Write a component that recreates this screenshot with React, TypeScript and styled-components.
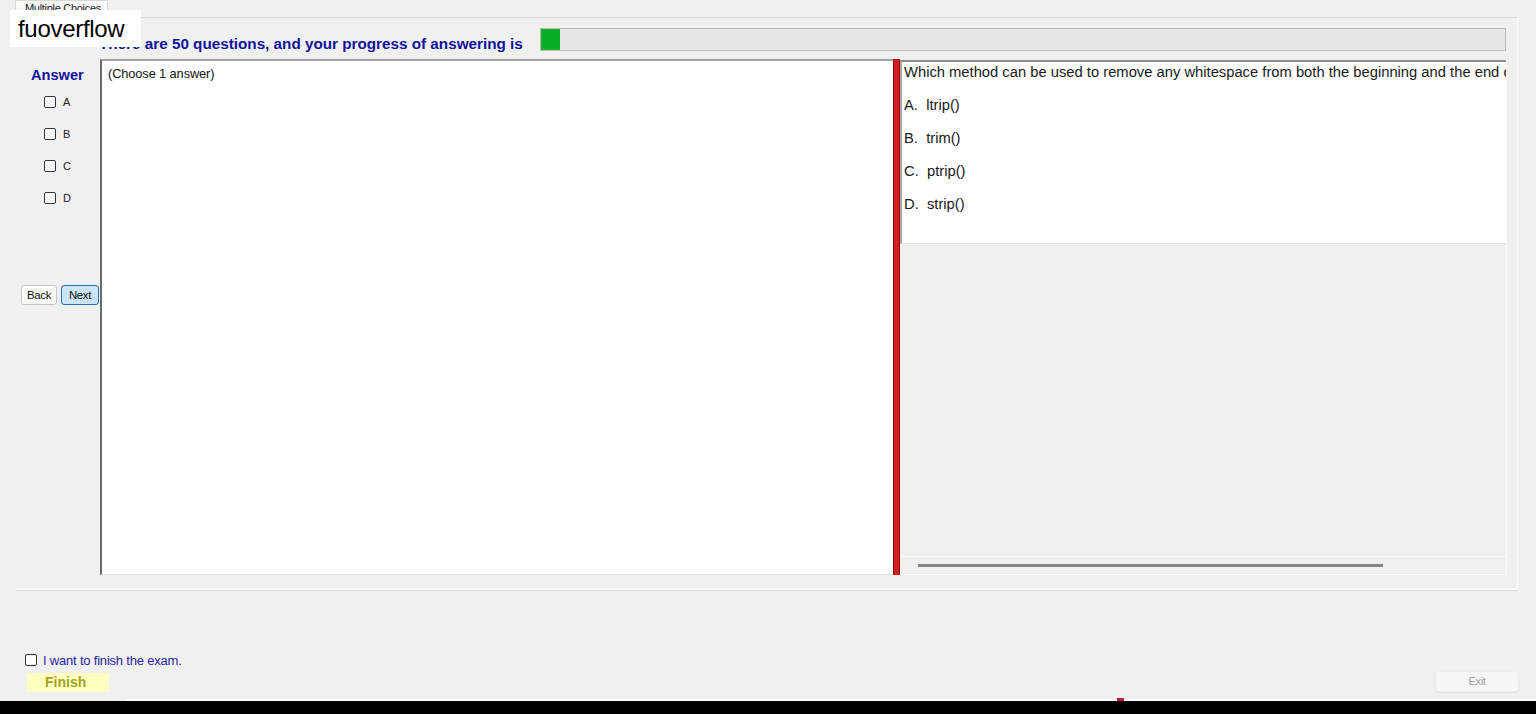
import React from "react";
import styled, { createGlobalStyle } from "styled-components";

const GlobalStyle = createGlobalStyle`
  html, body { margin: 0; padding: 0; }
  body {
    background: #f0f0f0;
    font-family: "Liberation Sans", Arial, sans-serif;
    overflow: hidden;
  }
  * { box-sizing: border-box; }
`;

const Page = styled.div`
  position: relative;
  width: 1536px;
  height: 714px;
  display: flex;
  flex-direction: column;
  background: #f0f0f0;
`;

const TabStrip = styled.div`
  height: 17px;
  padding-left: 15px;
  display: flex;
  align-items: flex-end;
`;

const Tab = styled.div`
  height: 18px;
  padding: 0 6px 0 9px;
  background: #f9f9f9;
  border: 1px solid #d9d9d9;
  border-bottom: none;
  font-size: 11px;
  line-height: 14px;
  color: #222;
  letter-spacing: -0.3px;
  margin-bottom: -1px;
  position: relative;
  z-index: 1;
`;

const TabPage = styled.div`
  margin: 0 18px 0 16px;
  height: 573px;
  border-top: 1px solid #dadada;
  border-bottom: 2px solid #fafafa;
  box-shadow: 0 1px 0 #dcdcdc;
  border-right: 1px solid #fafafa;
  display: flex;
  flex-direction: column;
`;

const HeaderRow = styled.div`
  height: 41px;
  display: flex;
  align-items: center;
  padding-left: 83px;
  padding-right: 11px;
`;

const Title = styled.div`
  font-weight: bold;
  font-size: 15.25px;
  color: #11139c;
  margin-top: 9px;
  white-space: nowrap;
`;

const Progress = styled.div`
  flex: 1;
  height: 23px;
  margin-left: 17px;
  margin-top: 2px;
  background: #e6e6e6;
  border: 1px solid #bcbcbc;
  display: flex;
`;

const ProgressFill = styled.div`
  height: 100%;
  background: #06b025;
`;

const Body = styled.div`
  height: 516px;
  display: flex;
`;

const LeftColumn = styled.div`
  width: 84px;
  display: flex;
  flex-direction: column;
`;

const AnswerLabel = styled.div`
  margin: 8px 0 0 15px;
  height: 16px;
  line-height: 16px;
  font-weight: bold;
  font-size: 14.6px;
  color: #11139c;
`;

const OptionList = styled.div`
  margin: 12px 0 0 28px;
  display: flex;
  flex-direction: column;
  gap: 18px;
`;

const OptionRow = styled.label`
  height: 14px;
  display: flex;
  align-items: center;
  gap: 7px;
  font-size: 11px;
  color: #222;
`;

const Box = styled.span<{ $size?: number }>`
  display: inline-block;
  width: ${(p) => p.$size ?? 12}px;
  height: ${(p) => p.$size ?? 12}px;
  border: 1px solid #333;
  border-radius: 2px;
  background: #fff;
  flex: none;
`;

const ButtonRow = styled.div`
  margin: 80px 0 0 5px;
  display: flex;
  gap: 4px;
`;

const NavButton = styled.button<{ $primary?: boolean }>`
  height: 20px;
  padding: 0;
  width: ${(p) => (p.$primary ? 38 : 36)}px;
  font-family: "Liberation Sans", Arial, sans-serif;
  font-size: 11.5px;
  letter-spacing: -0.4px;
  color: #111;
  background: ${(p) => (p.$primary ? "#cce4f7" : "#fdfdfd")};
  border: 1px solid ${(p) => (p.$primary ? "#2b6fae" : "#c6c6c6")};
  border-radius: 3px;
`;

const AnswerPanel = styled.div`
  width: 793px;
  background: #fff;
  border-top: 2px solid #a3a3a3;
  border-left: 2px solid #6a6a6a;
  border-bottom: 1px solid #e3e3e3;
  padding: 5px 0 0 6px;
  font-size: 12.8px;
  color: #111;
  letter-spacing: -0.1px;
`;

const Splitter = styled.div`
  width: 7px;
  background: #d51e1e;
  border-left: 1px solid #8a1010;
  border-right: 1px solid #8a1010;
`;

const RightPanel = styled.div`
  width: 607px;
  display: flex;
  flex-direction: column;
  border-right: 1px solid #fdfdfd;
  border-bottom: 1px solid #fdfdfd;
`;

const QuestionBox = styled.div`
  height: 184px;
  margin-top: 1px;
  background: #fff;
  border-top: 2px solid #8c8c8c;
  border-left: 2px solid #a9a9a9;
  border-bottom: 1px solid #e4e4e4;
  padding: 2px 0 0 2px;
  overflow: hidden;
  display: flex;
  flex-direction: column;
  gap: 16px;
`;

const QLine = styled.div`
  font-size: 14.75px;
  line-height: 17px;
  color: #1a1a1a;
  white-space: pre;
`;

const Filler = styled.div`
  flex: 1;
`;

const ScrollTrack = styled.div`
  height: 18px;
  border-top: 1px solid #fbfbfb;
  display: flex;
  align-items: center;
  padding-left: 18px;
`;

const ScrollThumb = styled.div`
  width: 465px;
  height: 3px;
  background: #858585;
`;

const BottomArea = styled.div`
  padding: 63px 0 0 25px;
  display: flex;
  flex-direction: column;
`;

const FinishCheck = styled.label`
  height: 14px;
  display: flex;
  align-items: center;
  gap: 6px;
  font-size: 13px;
  color: #2a1f9e;
  letter-spacing: -0.2px;
`;

const FinishRow = styled.div`
  margin-top: 4px;
  height: 21px;
  display: flex;
  justify-content: space-between;
  align-items: flex-start;
  padding-right: 17px;
`;

const FinishButton = styled.div`
  margin: 2px 0 0 2px;
  width: 82px;
  height: 19px;
  background: #ffffc2;
  color: #a4a41e;
  font-weight: bold;
  font-size: 14px;
  line-height: 19px;
  padding-left: 18px;
`;

const ExitButton = styled.div`
  width: 84px;
  height: 21px;
  background: #f7f7f7;
  border: 1px solid #ececec;
  border-radius: 3px;
  box-shadow: 0 1px 1px #e2e2e2;
  color: #a0a0a0;
  font-size: 11px;
  letter-spacing: -0.3px;
  line-height: 19px;
  text-align: center;
`;

const Taskbar = styled.div`
  margin-top: auto;
  position: relative;
  height: 15px;
  display: flex;
  flex-direction: column;
`;

const TaskbarEdge = styled.div`
  height: 2px;
  margin-left: 125px;
  background: #fdfdfd;
`;

const TaskbarBody = styled.div`
  flex: 1;
  background: #000;
`;

const TaskMark = styled.div`
  position: absolute;
  left: 1117px;
  top: -1px;
  width: 7px;
  height: 3px;
  background: #b3203c;
`;

const Watermark = styled.div`
  position: absolute;
  left: 10px;
  top: 10px;
  width: 131px;
  height: 37px;
  background: #fff;
  font-size: 24px;
  line-height: 37px;
  padding-left: 8px;
  color: #000;
  letter-spacing: -0.3px;
  z-index: 5;
`;

const options = ["A", "B", "C", "D"];
const answers = ["A.  ltrip()", "B.  trim()", "C.  ptrip()", "D.  strip()"];

export default function App() {
  return (
    <Page>
      <GlobalStyle />
      <TabStrip>
        <Tab>Multiple Choices</Tab>
      </TabStrip>
      <TabPage>
        <HeaderRow>
          <Title>There are 50 questions, and your progress of answering is</Title>
          <Progress>
            <ProgressFill style={{ width: `${(1 / 50) * 100}%` }} />
          </Progress>
        </HeaderRow>
        <Body>
          <LeftColumn>
            <AnswerLabel>Answer</AnswerLabel>
            <OptionList>
              {options.map((o) => (
                <OptionRow key={o}>
                  <Box />
                  {o}
                </OptionRow>
              ))}
            </OptionList>
            <ButtonRow>
              <NavButton>Back</NavButton>
              <NavButton $primary>Next</NavButton>
            </ButtonRow>
          </LeftColumn>
          <AnswerPanel>(Choose 1 answer)</AnswerPanel>
          <Splitter />
          <RightPanel>
            <QuestionBox>
              <QLine>
                Which method can be used to remove any whitespace from both the beginning and the end of a string?
              </QLine>
              {answers.map((a) => (
                <QLine key={a}>{a}</QLine>
              ))}
            </QuestionBox>
            <Filler />
            <ScrollTrack>
              <ScrollThumb />
            </ScrollTrack>
          </RightPanel>
        </Body>
      </TabPage>
      <BottomArea>
        <FinishCheck>
          <Box $size={12} />
          I want to finish the exam.
        </FinishCheck>
        <FinishRow>
          <FinishButton>Finish</FinishButton>
          <ExitButton>Exit</ExitButton>
        </FinishRow>
      </BottomArea>
      <Taskbar>
        <TaskMark />
        <TaskbarEdge />
        <TaskbarBody />
      </Taskbar>
      <Watermark>fuoverflow</Watermark>
    </Page>
  );
}
